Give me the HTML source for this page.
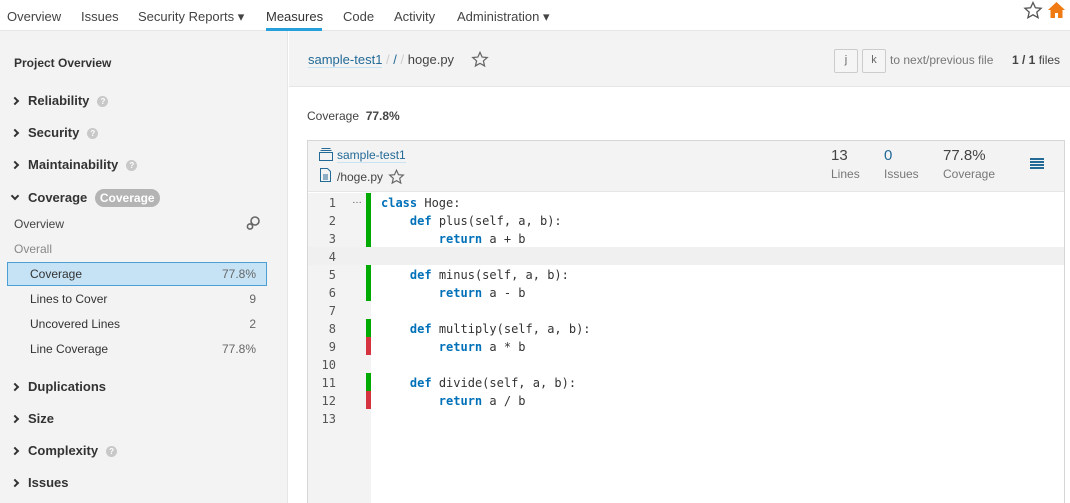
<!DOCTYPE html>
<html><head><meta charset="utf-8"><style>
*{margin:0;padding:0;box-sizing:border-box}
body{width:1070px;height:503px;overflow:hidden;background:#fff;font-family:"Liberation Sans",sans-serif;font-size:13px;color:#444;position:relative}
.a{position:absolute;white-space:nowrap}
.nav{left:0;top:0;width:1070px;height:31px;border-bottom:1px solid #e6e6e6;background:#fff}
.nav span{position:absolute;top:9px;font-size:13px;color:#444}
.side{left:0;top:31px;width:288px;height:472px;background:#f3f3f3;border-right:1px solid #e6e6e6}
.h{font-weight:bold;font-size:13px;color:#333}
.chev{display:inline-block;width:6px;height:6px;border-right:2px solid #333;border-top:2px solid #333;transform:rotate(45deg);margin-right:10px;position:relative;top:-1px}
.chevd{transform:rotate(135deg);top:-3px}
.q{display:inline-block;width:11px;height:11px;border-radius:50%;background:#c8c8c8;color:#fff;font-size:8px;text-align:center;line-height:11px;margin-left:8px;vertical-align:1px;font-weight:bold}
.code{font-family:"DejaVu Sans Mono","Liberation Mono",monospace;font-size:12px;color:#333;white-space:pre}
.kw{color:#0071b9;font-weight:bold}
.ln{width:28px;text-align:right;color:#555;font-family:"DejaVu Sans Mono",monospace;font-size:12px}
</style></head><body>
<div class="a nav">
<span style="left:7px">Overview</span>
<span style="left:81px">Issues</span>
<span style="left:138px">Security Reports ▾</span>
<span style="left:266px;color:#333">Measures</span>
<span style="left:343px">Code</span>
<span style="left:394px">Activity</span>
<span style="left:457px">Administration ▾</span>
</div>
<div class="a" style="left:266px;top:28px;width:56px;height:3px;background:#25a0da"></div>
<svg class="a" style="left:1023px;top:1px" width="20" height="19" viewBox="0 0 20 19"><path d="M10 1.5l2.4 5.3 5.7.5-4.3 3.8 1.3 5.6L10 13.8 4.9 16.7l1.3-5.6L1.9 7.3l5.7-.5z" fill="none" stroke="#555" stroke-width="1.3"/></svg>
<svg class="a" style="left:1047px;top:1px" width="19" height="18" viewBox="0 0 19 18"><path d="M9.5 1L1 9h2.5v8h4.5v-5h3v5h4.5V9H18z" fill="#f07a14"/></svg>

<div class="a side"></div>
<div class="a h" style="left:14px;top:56px;font-size:12px">Project Overview</div>
<div class="a h" style="left:12px;top:93px"><i class="chev"></i>Reliability<span class="q">?</span></div>
<div class="a h" style="left:12px;top:125px"><i class="chev"></i>Security<span class="q">?</span></div>
<div class="a h" style="left:12px;top:157px"><i class="chev"></i>Maintainability<span class="q">?</span></div>
<div class="a h" style="left:12px;top:189px"><i class="chev chevd"></i>Coverage <span style="display:inline-block;background:#b4b4b4;color:#fff;border-radius:10px;padding:2px 5px;margin-left:4px;font-size:12px">Coverage</span></div>
<div class="a" style="left:14px;top:217px;font-size:12px;color:#444">Overview</div>
<svg class="a" style="left:245px;top:215px" width="16" height="16" viewBox="0 0 16 16"><circle cx="10" cy="6" r="4" fill="none" stroke="#666" stroke-width="1.6"/><circle cx="5" cy="11.5" r="2.6" fill="none" stroke="#666" stroke-width="1.6"/></svg>
<div class="a" style="left:14px;top:242px;font-size:12px;color:#888">Overall</div>
<div class="a" style="left:7px;top:262px;width:260px;height:24px;background:#c5e3f5;border:1px solid #4b9fd5"></div>
<div class="a" style="left:30px;top:267px;font-size:12px;color:#333">Coverage</div><div class="a" style="right:814px;top:267px;font-size:12px;color:#666">77.8%</div>
<div class="a" style="left:30px;top:292px;font-size:12px;color:#333">Lines to Cover</div><div class="a" style="right:814px;top:292px;font-size:12px;color:#666">9</div>
<div class="a" style="left:30px;top:317px;font-size:12px;color:#333">Uncovered Lines</div><div class="a" style="right:814px;top:317px;font-size:12px;color:#666">2</div>
<div class="a" style="left:30px;top:342px;font-size:12px;color:#333">Line Coverage</div><div class="a" style="right:814px;top:342px;font-size:12px;color:#666">77.8%</div>
<div class="a h" style="left:12px;top:379px"><i class="chev"></i>Duplications</div>
<div class="a h" style="left:12px;top:411px"><i class="chev"></i>Size</div>
<div class="a h" style="left:12px;top:443px"><i class="chev"></i>Complexity<span class="q">?</span></div>
<div class="a h" style="left:12px;top:475px"><i class="chev"></i>Issues</div>

<div class="a" style="left:289px;top:31px;width:781px;height:56px;background:#f3f3f3;border-bottom:1px solid #e6e6e6"></div>
<div class="a" style="left:308px;top:52px;font-size:13px"><span style="color:#236a97;border-bottom:1px solid #cae3f2">sample-test1</span> <span style="color:#ccc">/</span> <span style="color:#236a97">/</span> <span style="color:#ccc">/</span> hoge.py</div>
<svg class="a" style="left:471px;top:51px" width="18" height="17" viewBox="0 0 20 19"><path d="M10 1.5l2.4 5.3 5.7.5-4.3 3.8 1.3 5.6L10 13.8 4.9 16.7l1.3-5.6L1.9 7.3l5.7-.5z" fill="none" stroke="#666" stroke-width="1.4"/></svg>
<div class="a" style="left:834px;top:49px;width:24px;height:24px;border:1px solid #ccc;border-radius:2px;background:#f5f5f5;text-align:center;line-height:21px;font-size:11px;color:#666">j</div>
<div class="a" style="left:862px;top:49px;width:24px;height:24px;border:1px solid #ccc;border-radius:2px;background:#f5f5f5;text-align:center;line-height:21px;font-size:11px;color:#666">k</div>
<div class="a" style="left:890px;top:53px;font-size:12px;color:#777">to next/previous file</div>
<div class="a" style="left:1012px;top:53px;font-size:12px;color:#444"><b>1 / 1</b> files</div>

<div class="a" style="left:307px;top:109px;font-size:12px;color:#444">Coverage &nbsp;<b>77.8%</b></div>

<div class="a" style="left:307px;top:140px;width:758px;height:363px;border:1px solid #d6d6d6;border-bottom:none;background:#fff"></div>
<div class="a" style="left:308px;top:141px;width:756px;height:51px;background:#f3f3f3;border-bottom:1px solid #e6e6e6"></div>
<svg class="a" style="left:319px;top:148px" width="14" height="13" viewBox="0 0 14 13"><rect x="0.5" y="4.5" width="13" height="8" fill="none" stroke="#236a97"/><path d="M1.5 2.5h11M2.5 0.5h9" stroke="#236a97"/></svg>
<div class="a" style="left:337px;top:148px;font-size:12px;color:#236a97;border-bottom:1px solid #cae3f2">sample-test1</div>
<svg class="a" style="left:320px;top:168px" width="11" height="14" viewBox="0 0 11 14"><path d="M.5.5h7l3 3v10h-10z" fill="none" stroke="#236a97"/><path d="M3 7h5M3 9h5M3 11h5" stroke="#236a97"/></svg>
<div class="a" style="left:337px;top:170px;font-size:12px;color:#444">/hoge.py</div>
<svg class="a" style="left:388px;top:169px" width="17" height="16" viewBox="0 0 20 19"><path d="M10 1.5l2.4 5.3 5.7.5-4.3 3.8 1.3 5.6L10 13.8 4.9 16.7l1.3-5.6L1.9 7.3l5.7-.5z" fill="none" stroke="#666" stroke-width="1.4"/></svg>
<div class="a" style="left:831px;top:147px;font-size:15px;color:#444">13</div>
<div class="a" style="left:831px;top:167px;font-size:12px;color:#777">Lines</div>
<div class="a" style="left:884px;top:147px;font-size:15px;color:#236a97">0</div>
<div class="a" style="left:884px;top:167px;font-size:12px;color:#777">Issues</div>
<div class="a" style="left:943px;top:147px;font-size:15px;color:#444">77.8%</div>
<div class="a" style="left:943px;top:167px;font-size:12px;color:#777">Coverage</div>
<div class="a" style="left:1030px;top:158px;width:14px;height:11px;background:repeating-linear-gradient(#236a97 0 2px,transparent 2px 3px)"></div>

<div class="a" style="left:308px;top:193px;width:63px;height:310px;background:#f3f3f3"></div>
<div class="a" style="left:308px;top:247px;width:756px;height:18px;background:#f0f0f0"></div>
<div class="a" style="left:352px;top:195px;font-size:10px;color:#555">…</div>

<div class="a" style="left:366px;top:193px;width:5px;height:54px;background:#00aa00"></div>
<div class="a" style="left:366px;top:265px;width:5px;height:36px;background:#00aa00"></div>
<div class="a" style="left:366px;top:319px;width:5px;height:18px;background:#00aa00"></div>
<div class="a" style="left:366px;top:337px;width:5px;height:18px;background:#d4333f"></div>
<div class="a" style="left:366px;top:373px;width:5px;height:18px;background:#00aa00"></div>
<div class="a" style="left:366px;top:391px;width:5px;height:18px;background:#d4333f"></div>

<div class="a" style="left:308px;top:194px;line-height:18px">
<div class="ln">1</div><div class="ln">2</div><div class="ln">3</div><div class="ln">4</div><div class="ln">5</div><div class="ln">6</div><div class="ln">7</div><div class="ln">8</div><div class="ln">9</div><div class="ln">10</div><div class="ln">11</div><div class="ln">12</div><div class="ln">13</div>
</div>
<pre class="a code" style="left:381px;top:194px;line-height:18px;white-space:pre"><span class="kw">class</span> Hoge:
    <span class="kw">def</span> plus(self, a, b):
        <span class="kw">return</span> a + b

    <span class="kw">def</span> minus(self, a, b):
        <span class="kw">return</span> a - b

    <span class="kw">def</span> multiply(self, a, b):
        <span class="kw">return</span> a * b

    <span class="kw">def</span> divide(self, a, b):
        <span class="kw">return</span> a / b
</pre>
</body></html>
